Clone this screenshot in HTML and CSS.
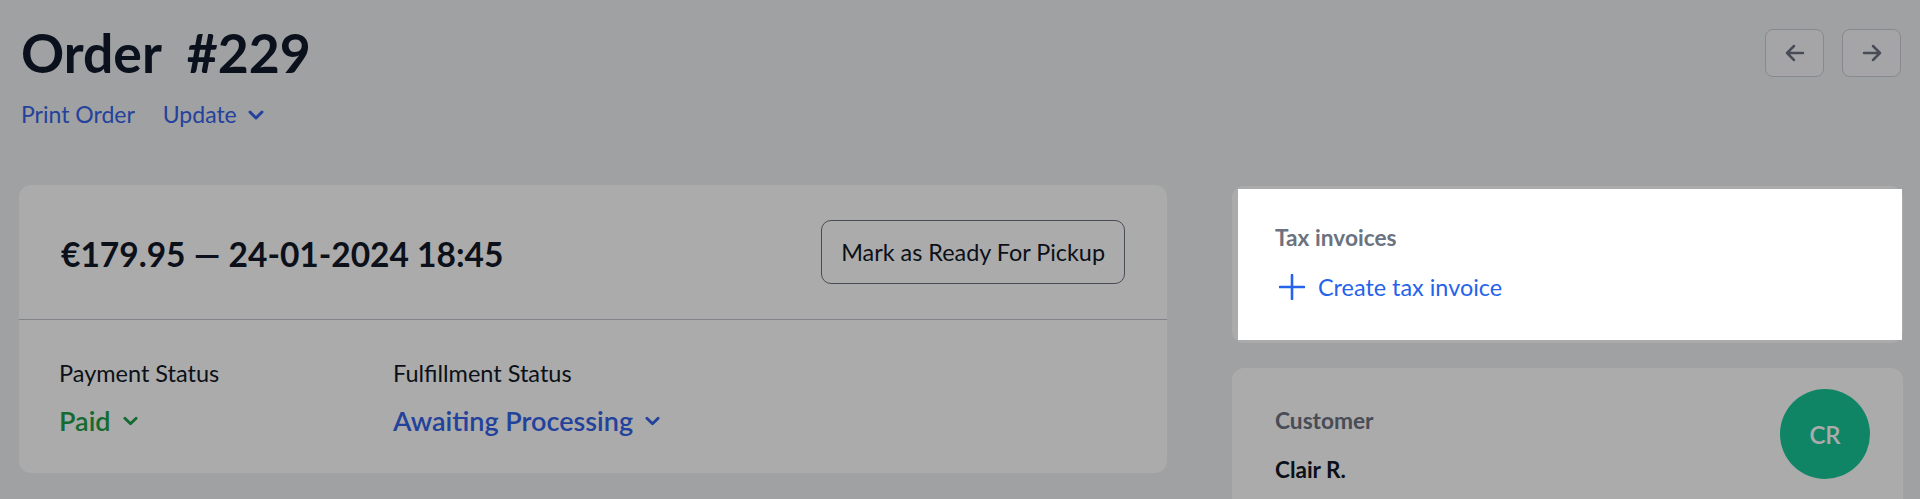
FILE: index.html
```html
<!DOCTYPE html>
<html lang="en">
  <head>
    <title>Order #229</title>
    <link rel="stylesheet" href="styles.css">
  </head>
  <body>
    <main class="page">
      <!-- page header: title, quick links, prev / next -->
      <header class="page-header">
        <div>
          <h1 class="page-title">Order&nbsp; #229</h1>
          <nav class="page-links">
            <a href="#">Print Order</a>
            <a href="#" class="has-caret">Update
              <svg class="caret" viewBox="0 0 16 10" width="16" height="10"><path d="M2 2l6 6 6-6" fill="none" stroke="currentColor" stroke-width="3" stroke-linecap="round" stroke-linejoin="round"/></svg>
            </a>
          </nav>
        </div>
        <div class="pager">
          <button class="pager-btn" aria-label="Previous order">
            <svg viewBox="0 0 24 24" width="24" height="24"><path d="M20 12H4M11 5l-7 7 7 7" fill="none" stroke="currentColor" stroke-width="2.5" stroke-linecap="round" stroke-linejoin="round"/></svg>
          </button>
          <button class="pager-btn" aria-label="Next order">
            <svg viewBox="0 0 24 24" width="24" height="24"><path d="M4 12h16M13 5l7 7-7 7" fill="none" stroke="currentColor" stroke-width="2.5" stroke-linecap="round" stroke-linejoin="round"/></svg>
          </button>
        </div>
      </header>

      <div class="layout">
        <section class="card order-card">
          <div class="order-head">
            <h2 class="order-sum">€179.95 — 24-01-2024 18:45</h2>
            <button class="btn-outline">Mark as Ready For Pickup</button>
          </div>
          <div class="order-status">
            <div class="status">
              <div class="status-label">Payment Status</div>
              <div class="status-value paid">Paid
                <svg class="caret" viewBox="0 0 16 10" width="15" height="10"><path d="M2 2l6 6 6-6" fill="none" stroke="currentColor" stroke-width="3" stroke-linecap="round" stroke-linejoin="round"/></svg>
              </div>
            </div>
            <div class="status">
              <div class="status-label">Fulfillment Status</div>
              <div class="status-value awaiting">Awaiting Processing
                <svg class="caret" viewBox="0 0 16 10" width="15" height="10"><path d="M2 2l6 6 6-6" fill="none" stroke="currentColor" stroke-width="3" stroke-linecap="round" stroke-linejoin="round"/></svg>
              </div>
            </div>
          </div>
        </section>

        <aside class="side">
          <!-- the tour step points at this card -->
          <section class="card tax-card">
            <div class="spotlight"></div>
            <div class="tax-body">
              <h3 class="card-label">Tax invoices</h3>
              <a href="#" class="add-link">
                <svg viewBox="0 0 26 26" width="26" height="26"><path d="M13 1v24M1 13h24" fill="none" stroke="currentColor" stroke-width="2.6" stroke-linecap="round"/></svg>
                Create tax invoice
              </a>
            </div>
          </section>

          <section class="card customer-card">
            <div>
              <h3 class="card-label">Customer</h3>
              <div class="customer-name">Clair R.</div>
            </div>
            <div class="avatar">CR</div>
          </section>
        </aside>
      </div>
    </main>
  </body>
</html>
```

FILE: styles.css
```css
body {
  margin: 0;
  background-color: #eff0f3;
  font-family: Lato, "Open Sans", sans-serif;
  color: #111827;
  overflow: hidden;
}

.page {
  padding: 20px 17px 0 19px;
}

.page-header {
  display: flex;
  justify-content: space-between;
  align-items: flex-start;
}

.page-title {
  margin: 0;
  font-size: 53.5px;
  line-height: 1.2;
  font-weight: 700;
  color: #0f1a2c;
  padding-left: 2px;
}

.page-links {
  display: flex;
  gap: 28px;
  margin-top: 17px;
  padding-left: 2px;
}

.page-links a {
  color: #3563e9;
  text-decoration: none;
  font-size: 23px;
  line-height: 1.2;
}

.has-caret {
  display: flex;
  align-items: center;
  gap: 11px;
}

.pager {
  display: flex;
  gap: 18px;
  margin-top: 9px;
  padding-right: 2px;
}

.pager-btn {
  width: 59px;
  height: 48px;
  display: flex;
  align-items: center;
  justify-content: center;
  background: #f6f7f9;
  border: 1.5px solid #c9cdd3;
  border-radius: 8px;
  color: #6b7280;
  padding: 0;
}

.layout {
  display: grid;
  grid-template-columns: 1fr 671px;
  align-items: start;
  gap: 65px;
  margin-top: 56px;
}

.card {
  background: #ffffff;
  border-radius: 12px;
}

.order-head {
  display: flex;
  justify-content: space-between;
  align-items: center;
  padding: 35px 42px;
  border-bottom: 1px solid #bfc3ca;
}

.order-sum {
  margin: 5px 0 0;
  font-size: 33.5px;
  font-weight: 700;
}

.btn-outline {
  height: 64px;
  padding: 0 19px;
  background: transparent;
  border: 1.5px solid #6b7280;
  border-radius: 10px;
  font-family: inherit;
  font-size: 23.4px;
  color: #111827;
}

.order-status {
  display: flex;
  padding: 39px 40px 36px;
}

.status {
  width: 334px;
}

.status-label {
  font-size: 23.5px;
  line-height: 1.2;
}

.status-value {
  display: flex;
  align-items: center;
  gap: 12px;
  margin-top: 18px;
  font-size: 27px;
  line-height: 1.2;
  font-weight: 600;
}

.paid { color: #1e9e47; }
.awaiting { color: #3563e9; }

.side {
  display: flex;
  flex-direction: column;
  gap: 25px;
  padding-top: 1px;
}

.tax-card {
  position: relative;
  z-index: 5;
}

/* white cut-out in the dimmed page */
.spotlight {
  position: absolute;
  top: 3px;
  left: 6px;
  right: 1px;
  bottom: 3px;
  background: #ffffff;
  box-shadow: 0 0 0 4000px rgba(0, 0, 0, 0.33);
}

.tax-body {
  position: relative;
  padding: 38px 43px 42px;
}

.card-label {
  margin: 0;
  font-size: 22.7px;
  line-height: 1.2;
  font-weight: 700;
  color: #6b7280;
}

.add-link {
  display: flex;
  align-items: center;
  gap: 13px;
  margin-top: 22px;
  padding-left: 4px;
  color: #2563eb;
  text-decoration: none;
  font-size: 23.4px;
  line-height: 1.2;
}

.customer-card {
  display: flex;
  justify-content: space-between;
  align-items: flex-start;
  padding: 39px 33px 30px 43px;
  height: 200px;
}

.customer-name {
  margin-top: 22px;
  font-size: 22.5px;
  font-weight: 700;
}

.avatar {
  width: 90px;
  height: 90px;
  margin-top: -18px;
  border-radius: 50%;
  background: #18c797;
  color: #ffffff;
  display: flex;
  align-items: center;
  justify-content: center;
  font-size: 24px;
  font-weight: 600;
}
```
